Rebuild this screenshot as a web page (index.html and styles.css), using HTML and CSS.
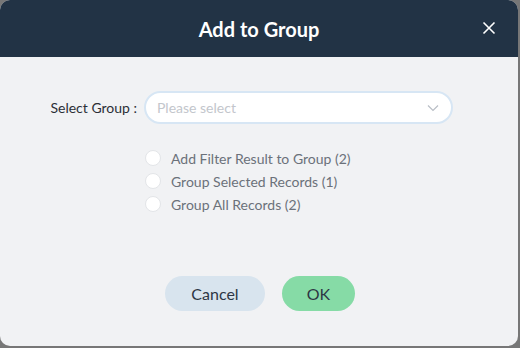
FILE: index.html
```html
<!DOCTYPE html>
<html lang="en">
<head>
    <meta charset="UTF-8" />
    <title>Add to Group</title>
    <link rel="stylesheet" href="styles.css">
</head>
<body>
    <div class="dialog">
        <div class="dialog-header">
            <h1>Add to Group</h1>
            <button class="close-btn" aria-label="close">
                <svg width="14" height="14" viewBox="0 0 14 14"><path d="M1.5 1.5L12.5 12.5M12.5 1.5L1.5 12.5" stroke="#fff" stroke-width="1.6" fill="none"/></svg>
            </button>
        </div>
        <div class="dialog-body">
            <div class="field">
                <label>Select Group :</label>
                <div class="select">
                    <span class="placeholder">Please select</span>
                    <svg width="12" height="8" viewBox="0 0 12 8"><path d="M1 1.5L6 6.5L11 1.5" stroke="#b9bec6" stroke-width="1.2" fill="none"/></svg>
                </div>
            </div>
            <div class="options">
                <label class="option"><span class="radio"></span>Add Filter Result to Group (2)</label>
                <label class="option"><span class="radio"></span>Group Selected Records (1)</label>
                <label class="option"><span class="radio"></span>Group All Records (2)</label>
            </div>
        </div>
        <div class="dialog-footer">
            <button class="btn btn-cancel">Cancel</button>
            <button class="btn btn-ok">OK</button>
        </div>
    </div>
</body>
</html>
```

FILE: styles.css
```css
html, body {
    margin: 0;
    padding: 0;
    background: #777;
    font-family: "Lato", "Noto Sans", sans-serif;
}
.dialog {
    width: 518px;
    height: 346px;
    background: #f1f2f4;
    border-radius: 10px;
    overflow: hidden;
    display: flex;
    flex-direction: column;
}
.dialog-header {
    height: 57px;
    background: #223345;
    display: flex;
    align-items: center;
    justify-content: center;
    position: relative;
}
.dialog-header h1 {
    margin: 0;
    color: #fff;
    font-size: 20px;
    font-weight: 700;
}
.close-btn {
    position: absolute;
    right: 22px;
    top: 21px;
    border: none;
    background: none;
    padding: 0;
    width: 14px;
    height: 14px;
    cursor: pointer;
    display: flex;
}
.dialog-body {
    flex: 1;
    padding-top: 34px;
}
.field {
    display: flex;
    align-items: center;
}
.field label {
    width: 144px;
    text-align: right;
    font-size: 14px;
    color: #2b2f36;
    padding-right: 7px;
    box-sizing: border-box;
}
.select {
    width: 309px;
    height: 33px;
    box-sizing: border-box;
    border: 2px solid #d7e6f4;
    border-radius: 17px;
    background: #fff;
    display: flex;
    align-items: center;
    justify-content: space-between;
    padding: 0 12px 0 11px;
}
.placeholder {
    color: #c3c6cc;
    font-size: 14px;
}
.options {
    margin: 25px 0 0 145px;
    display: flex;
    flex-direction: column;
    gap: 5px;
}
.option {
    display: flex;
    align-items: center;
    font-size: 14px;
    color: #6b717a;
    height: 18px;
}
.radio {
    width: 14px;
    height: 14px;
    border-radius: 50%;
    background: #fff;
    border: 1px solid #e3e5e8;
    margin-right: 10px;
}
.dialog-footer {
    display: flex;
    justify-content: center;
    gap: 17px;
    padding-bottom: 35px;
    padding-left: 2px;
}
.btn {
    height: 35px;
    border: none;
    border-radius: 18px;
    font-family: inherit;
    font-size: 16px;
    color: #2d3744;
    cursor: pointer;
}
.btn-cancel {
    width: 100px;
    background: #d8e4ee;
}
.btn-ok {
    width: 73px;
    background: #86dba6;
}
```
